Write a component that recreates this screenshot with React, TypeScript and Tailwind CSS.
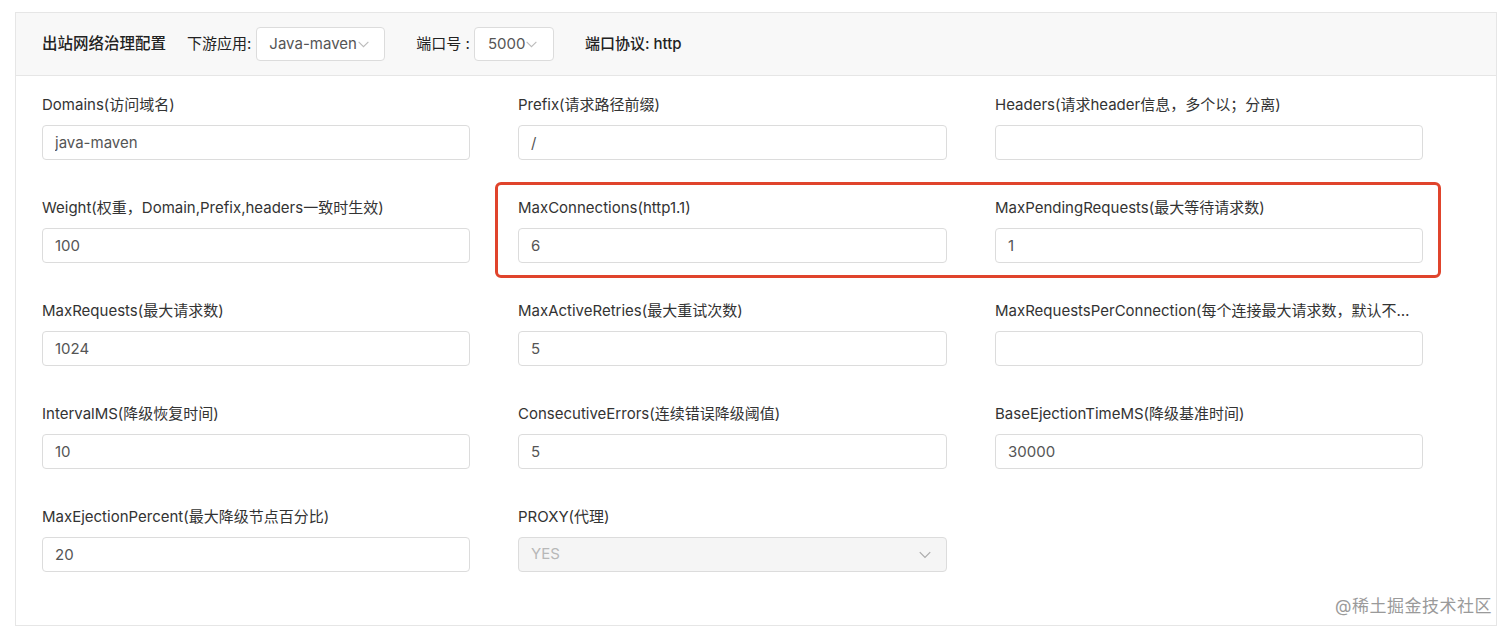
import React from 'react';

type Field = {
  label: string;
  value?: string;
  kind?: 'input' | 'select';
  disabled?: boolean;
};

const fields: (Field | null)[] = [
  { label: 'Domains(访问域名)', value: 'java-maven' },
  { label: 'Prefix(请求路径前缀)', value: '/' },
  { label: 'Headers(请求header信息，多个以；分离)', value: '' },
  { label: 'Weight(权重，Domain,Prefix,headers一致时生效)', value: '100' },
  { label: 'MaxConnections(http1.1)', value: '6' },
  { label: 'MaxPendingRequests(最大等待请求数)', value: '1' },
  { label: 'MaxRequests(最大请求数)', value: '1024' },
  { label: 'MaxActiveRetries(最大重试次数)', value: '5' },
  { label: 'MaxRequestsPerConnection(每个连接最大请求数，默认不限制)', value: '' },
  { label: 'IntervalMS(降级恢复时间)', value: '10' },
  { label: 'ConsecutiveErrors(连续错误降级阈值)', value: '5' },
  { label: 'BaseEjectionTimeMS(降级基准时间)', value: '30000' },
  { label: 'MaxEjectionPercent(最大降级节点百分比)', value: '20' },
  { label: 'PROXY(代理)', value: 'YES', kind: 'select', disabled: true },
];

function Chevron({ className }: { className?: string }) {
  return (
    <svg viewBox="0 0 12 12" className={className} fill="none" stroke="currentColor" strokeWidth="1">
      <path d="M1.5 3.5l4.5 4.5 4.5-4.5" />
    </svg>
  );
}

function FormField({ field }: { field: Field }) {
  return (
    <div className="flex flex-col min-w-0">
      <label className="block truncate text-[15px] leading-[21px] text-[#333]">{field.label}</label>
      {field.kind === 'select' ? (
        <div className="mt-[10px] h-[35px] flex items-center justify-between rounded border border-[#dcdcdc] bg-[#f5f5f5] pl-3 pr-[14px] text-[15px] text-[#b8b8b8]">
          <span>{field.value}</span>
          <Chevron className="h-[14px] w-[14px] text-[#aaa]" />
        </div>
      ) : (
        <input
          type="text"
          defaultValue={field.value}
          className="mt-[10px] h-[35px] w-full rounded border border-[#dcdcdc] bg-white px-3 text-[15px] text-[#555] outline-none"
        />
      )}
    </div>
  );
}

export default function App() {
  return (
    <div
      className="relative h-[637px] w-[1512px] bg-white pt-[12px] pl-[15px]"
      style={{ fontFamily: 'Inter, "Noto Sans CJK SC", sans-serif' }}
    >
      <div className="relative w-[1482px] h-[614px] border border-[#e6e6e6] bg-white">
        {/* header bar */}
        <div className="flex h-[63px] items-center border-b border-[#e6e6e6] bg-[#f8f8f8] pl-[26px] text-[15px] text-[#222]">
          <span className="font-medium text-[15.5px]">出站网络治理配置</span>
          <span className="ml-[21px]">下游应用:</span>
          <div className="ml-[5px] flex h-[34px] w-[129px] items-center rounded border border-[#dcdcdc] bg-white pl-[12px] text-[#555]">
            <span>Java-maven</span>
            <Chevron className="h-[13px] w-[13px] text-[#bbb]" />
          </div>
          <span className="ml-[31px]">端口号 :</span>
          <div className="ml-[4px] flex h-[34px] w-[80px] items-center rounded border border-[#dcdcdc] bg-white pl-[13px] text-[#555]">
            <span>5000</span>
            <Chevron className="h-[13px] w-[13px] text-[#bbb]" />
          </div>
          <span className="ml-[31px] font-medium">端口协议: http</span>
        </div>

        {/* form grid */}
        <div className="grid grid-cols-[428px_429px_428px] gap-x-[48px] gap-y-[37px] pl-[26px] pt-[18px]">
          {fields.map((f, i) => (f ? <FormField key={i} field={f} /> : <div key={i} />))}
        </div>

        {/* annotation */}
        <div className="pointer-events-none absolute left-[479px] top-[169px] h-[96px] w-[946px] rounded-[6px] border-[3px] border-[#e0442c]" />
      </div>

      <div className="absolute bottom-[18px] right-[20px] text-[17px] tracking-[0.5px] text-[#9a9a9a]" style={{ textShadow: '0 0 1px #fff' }}>
        @稀土掘金技术社区
      </div>
    </div>
  );
}
